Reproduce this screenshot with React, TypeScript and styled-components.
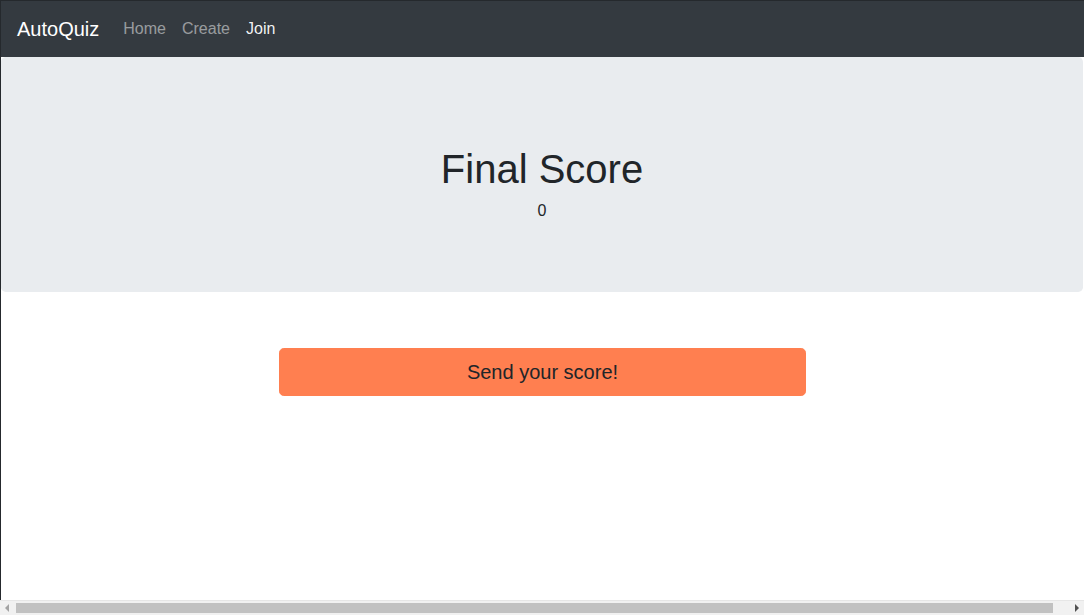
import React from "react";
import styled, { createGlobalStyle } from "styled-components";

const GlobalStyle = createGlobalStyle`
  * { box-sizing: border-box; }
  html {
    height: 100%;
    background: #fff;
    border-left: 1px solid #25292d;
    border-top: 1px solid #25292d;
    overflow: hidden;
  }
  body {
    margin: 0;
    font-family: "Liberation Sans", Arial, sans-serif;
    font-size: 16px;
    line-height: 1.5;
    color: #212529;
    background: #fff;
  }
`;

const Navbar = styled.nav`
  display: flex;
  align-items: center;
  height: 56px;
  padding: 8px 16px;
  background: #343a40;
`;

const Brand = styled.a`
  font-size: 20px;
  line-height: 30px;
  color: #fff;
  margin-right: 16px;
  text-decoration: none;
`;

const NavList = styled.div`
  display: flex;
  align-items: center;
`;

const NavLink = styled.a<{ $active?: boolean }>`
  padding: 8px;
  font-size: 16px;
  line-height: 24px;
  text-decoration: none;
  color: ${(p) => (p.$active ? "rgba(255,255,255,0.95)" : "rgba(255,255,255,0.5)")};
`;

const Jumbotron = styled.section`
  background: #e9ecef;
  border-radius: 4.8px;
  margin: 0 1px 32px 0;
  padding: 88px 32px 69px;
  text-align: center;
`;

const Title = styled.h1`
  margin: 0 0 6px;
  font-size: 40px;
  font-weight: 400;
  line-height: 48px;
  color: #212529;
`;

const Score = styled.p`
  margin: 0;
  font-size: 16px;
  line-height: 24px;
`;

const Row = styled.div`
  display: flex;
  margin: 0 -15px;
  padding-top: 24px;
`;

const Col = styled.div`
  flex: 0 0 50%;
  max-width: 50%;
  margin-left: 25%;
  padding: 0 15px;
`;

const SendButton = styled.button`
  display: block;
  width: 100%;
  height: 48px;
  padding: 8px 16px;
  border: 1px solid #ff7f50;
  border-radius: 4.8px;
  background: #ff7f50;
  color: #212529;
  font-family: "Liberation Sans", Arial, sans-serif;
  font-size: 20px;
  line-height: 30px;
  cursor: pointer;
`;

/* Browser horizontal scrollbar drawn over the bottom of the window */
const ScrollBar = styled.div`
  position: fixed;
  left: 0;
  right: 0;
  bottom: 0;
  height: 15px;
  display: flex;
  align-items: stretch;
  background: #f1f1f1;
  border-top: 1px solid #e6e6e6;
`;

const ArrowButton = styled.div<{ $dir: "left" | "right"; $disabled?: boolean }>`
  flex: 0 0 15px;
  display: flex;
  align-items: center;
  justify-content: center;
  &::before {
    content: "";
    width: 0;
    height: 0;
    border-top: 4px solid transparent;
    border-bottom: 4px solid transparent;
    ${(p) =>
      p.$dir === "left"
        ? `border-right: 4px solid ${p.$disabled ? "#a3a3a3" : "#505050"}; margin-right: 1px;`
        : `border-left: 4px solid ${p.$disabled ? "#a3a3a3" : "#505050"}; margin-left: 1px;`}
  }
`;

const Track = styled.div`
  flex: 1;
  display: flex;
  align-items: center;
  padding: 0 1px;
`;

const Thumb = styled.div`
  height: 10px;
  width: 98.6%;
  background: #c1c1c1;
`;

export default function App() {
  return (
    <>
      <GlobalStyle />
      <Navbar>
        <Brand href="#">AutoQuiz</Brand>
        <NavList>
          <NavLink href="#">Home</NavLink>
          <NavLink href="#">Create</NavLink>
          <NavLink href="#" $active>
            Join
          </NavLink>
        </NavList>
      </Navbar>
      <Jumbotron>
        <Title>Final Score</Title>
        <Score>0</Score>
      </Jumbotron>
      <Row>
        <Col>
          <SendButton>Send your score!</SendButton>
        </Col>
      </Row>
      <ScrollBar aria-hidden>
        <ArrowButton $dir="left" $disabled />
        <Track>
          <Thumb />
        </Track>
        <ArrowButton $dir="right" />
      </ScrollBar>
    </>
  );
}
